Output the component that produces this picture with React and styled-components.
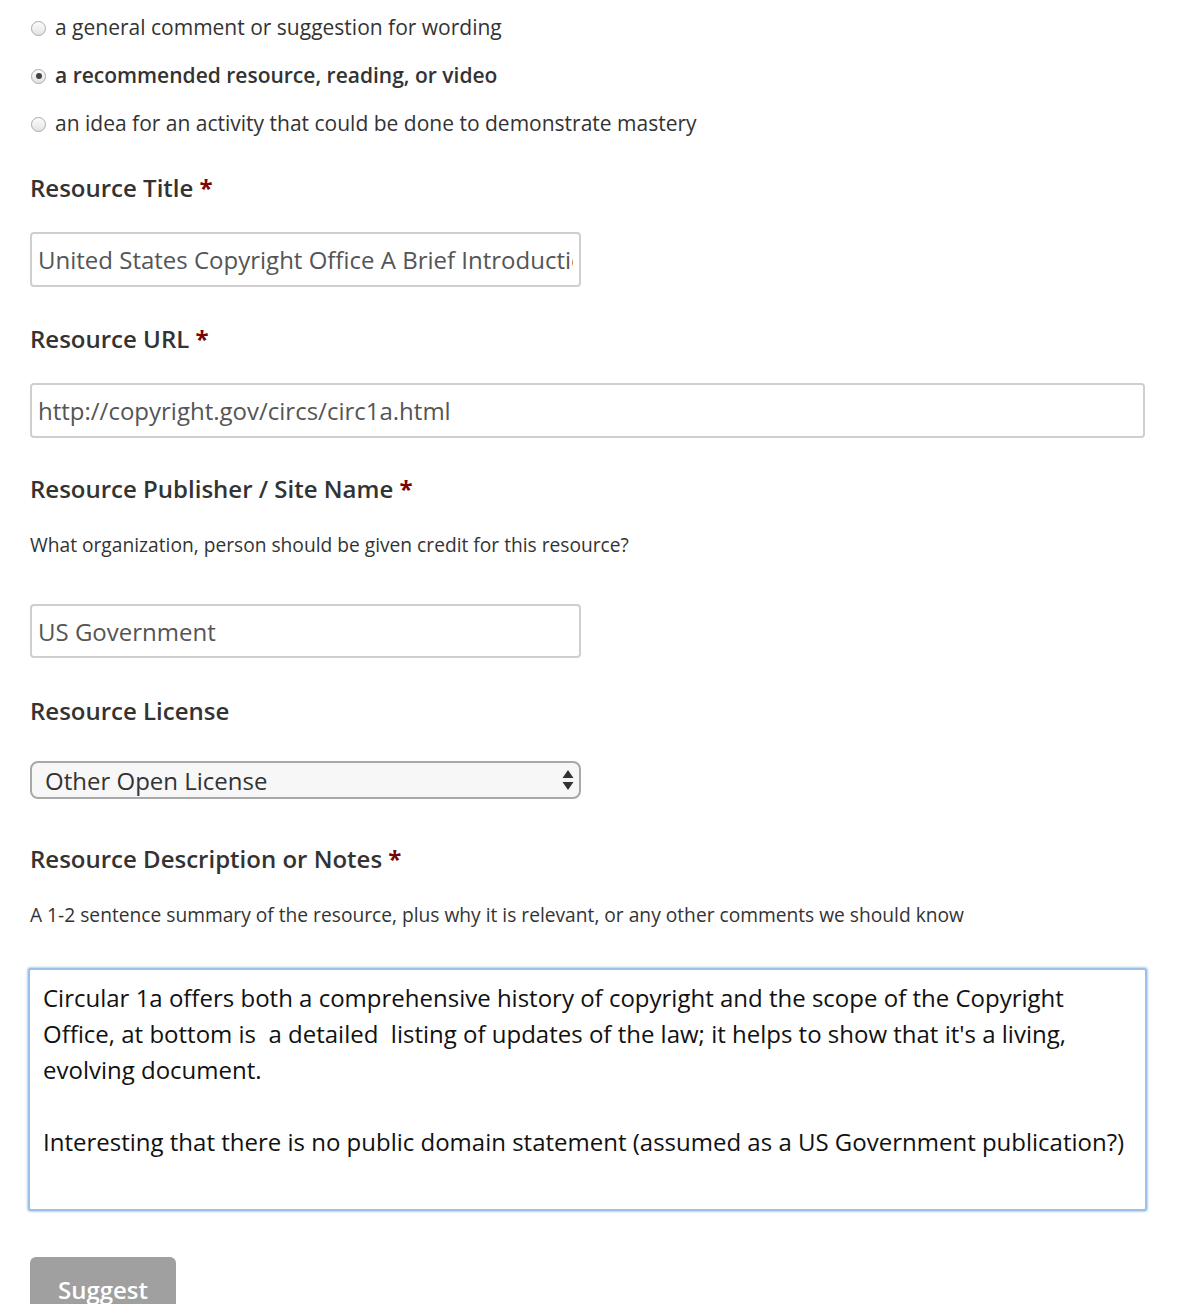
import React from "react";
import styled, { createGlobalStyle } from "styled-components";

const Global = createGlobalStyle`
  html, body { margin: 0; padding: 0; background: #fff; }
  body { font-family: "Open Sans", "Liberation Sans", sans-serif; color: #333; }
  * { box-sizing: border-box; }
`;

const Page = styled.form`
  padding: 12px 55px 0 30px;
  width: 1204px;
`;

const RadioList = styled.div`
  display: flex;
  flex-direction: column;
  gap: 18px;
`;

const RadioRow = styled.label`
  display: flex;
  align-items: center;
  gap: 9px;
  height: 30px;
  font-size: 21px;
  line-height: 30px;
  color: #333;
  font-weight: ${(p) => (p.$checked ? 600 : 400)};
  padding-left: 1px;
`;

const RadioInput = styled.input`
  appearance: none;
  -webkit-appearance: none;
  margin: 2px 0 0 0;
  width: 15px;
  height: 15px;
  border-radius: 50%;
  border: 1px solid #a9a9a9;
  background: linear-gradient(#fbfbfb, #e4e4e4);
  box-shadow: inset 0 1px 1px rgba(255, 255, 255, 0.8);
  position: relative;
  flex: none;
  &:checked::after {
    content: "";
    position: absolute;
    left: 50%;
    top: 50%;
    width: 6px;
    height: 6px;
    margin: -3px 0 0 -3px;
    border-radius: 50%;
    background: #444;
  }
`;

const Field = styled.div`
  display: flex;
  flex-direction: column;
  align-items: flex-start;
  margin-top: ${(p) => p.$top}px;
`;

const Label = styled.label`
  font-size: 24px;
  line-height: 30px;
  font-weight: 600;
  color: #333;
  margin-bottom: ${(p) => p.$gap ?? 29}px;
`;

const Req = styled.span`
  color: #7a0505;
  font-weight: 700;
`;

const Help = styled.p`
  margin: 0 0 ${(p) => p.$gap}px 0;
  font-size: 19.2px;
  line-height: 26px;
  color: #333;
`;

const TextInput = styled.input`
  width: ${(p) => (p.$wide ? "1115px" : "551px")};
  height: ${(p) => p.$h || 55}px;
  border: 2px solid #cfcfcf;
  border-radius: 4px;
  padding: 0 6px;
  font-family: "Open Sans", "Liberation Sans", sans-serif;
  font-size: 24px;
  color: #555;
  background: #fff;
  outline: none;
`;

const SelectWrap = styled.div`
  position: relative;
  width: 551px;
  height: 38px;
`;

const Select = styled.select`
  appearance: none;
  -webkit-appearance: none;
  width: 100%;
  height: 100%;
  border: 2px solid #a8a8a8;
  border-radius: 8px;
  background: #f7f7f7;
  padding: 0 30px 0 13px;
  font-family: "Open Sans", "Liberation Sans", sans-serif;
  font-size: 24px;
  color: #333;
  outline: none;
`;

const Arrows = styled.svg`
  position: absolute;
  right: 7px;
  top: 8px;
  pointer-events: none;
`;

const TextArea = styled.textarea`
  display: block;
  width: 1119px;
  height: 243px;
  margin-left: -2px;
  border: 2px solid #9cc0e8;
  border-radius: 3px;
  box-shadow: 0 0 2px 1px rgba(120, 165, 225, 0.55);
  padding: 10px 13px;
  font-family: "Open Sans", "Liberation Sans", sans-serif;
  font-size: 24px;
  line-height: 36px;
  color: #111;
  resize: none;
  overflow: hidden;
  white-space: pre;
  outline: none;
`;

const Button = styled.button`
  margin-top: 46px;
  width: 146px;
  height: 60px;
  border: none;
  border-radius: 6px;
  background: #a0a0a0;
  color: #fff;
  font-family: "Open Sans", "Liberation Sans", sans-serif;
  font-size: 24px;
  font-weight: 600;
  padding: 16px 0 0 0;
  display: flex;
  justify-content: center;
  align-items: flex-start;
`;

const description =
  "Circular 1a offers both a comprehensive history of copyright and the scope of the Copyright\n" +
  "Office, at bottom is  a detailed  listing of updates of the law; it helps to show that it's a living,\n" +
  "evolving document.\n" +
  "\n" +
  "Interesting that there is no public domain statement (assumed as a US Government publication?)";

export default function App() {
  return (
    <>
      <Global />
      <Page onSubmit={(e) => e.preventDefault()}>
        <RadioList>
          <RadioRow>
            <RadioInput type="radio" name="kind" />
            a general comment or suggestion for wording
          </RadioRow>
          <RadioRow $checked>
            <RadioInput type="radio" name="kind" defaultChecked />
            a recommended resource, reading, or video
          </RadioRow>
          <RadioRow>
            <RadioInput type="radio" name="kind" />
            an idea for an activity that could be done to demonstrate mastery
          </RadioRow>
        </RadioList>

        <Field $top={35}>
          <Label>
            Resource Title <Req>*</Req>
          </Label>
          <TextInput defaultValue="United States Copyright Office A Brief Introduction and History" />
        </Field>

        <Field $top={37}>
          <Label>
            Resource URL <Req>*</Req>
          </Label>
          <TextInput $wide defaultValue="http://copyright.gov/circs/circ1a.html" />
        </Field>

        <Field $top={36}>
          <Label $gap={28}>
            Resource Publisher / Site Name <Req>*</Req>
          </Label>
          <Help $gap={46}>What organization, person should be given credit for this resource?</Help>
          <TextInput $h={54} defaultValue="US Government" />
        </Field>

        <Field $top={38}>
          <Label $gap={35}>Resource License</Label>
          <SelectWrap>
            <Select defaultValue="other">
              <option value="other">Other Open License</option>
            </Select>
            <Arrows width="12" height="22" viewBox="0 0 12 22">
              <path d="M6 1 L11.5 9 L0.5 9 Z" fill="#333" />
              <path d="M6 21 L11.5 13 L0.5 13 Z" fill="#333" />
            </Arrows>
          </SelectWrap>
        </Field>

        <Field $top={45}>
          <Label $gap={28}>
            Resource Description or Notes <Req>*</Req>
          </Label>
          <Help $gap={40}>
            A 1-2 sentence summary of the resource, plus why it is relevant, or any other comments we should know
          </Help>
          <TextArea wrap="off" defaultValue={description} />
        </Field>

        <Button type="submit">Suggest</Button>
      </Page>
    </>
  );
}
